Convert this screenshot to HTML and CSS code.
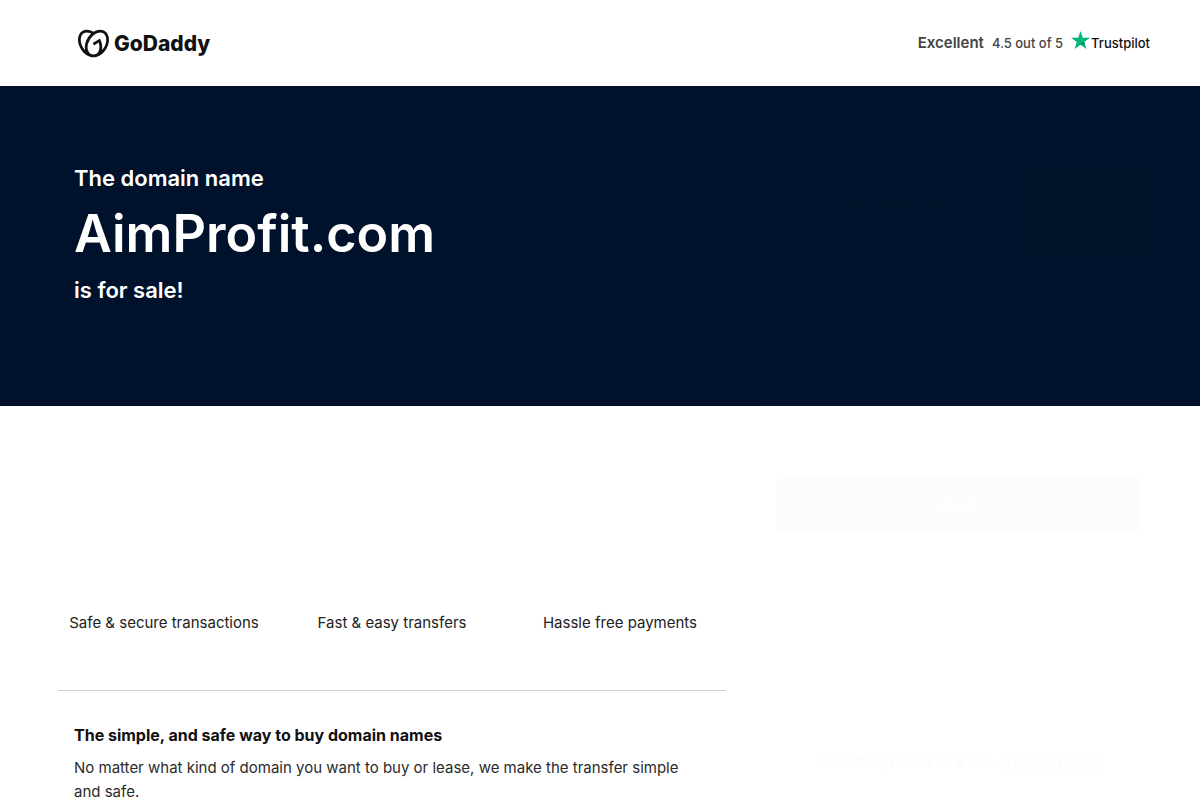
FILE: index.html
```html
<!DOCTYPE html>
<html lang="en">
<head>
<meta charset="utf-8">
<meta name="viewport" content="width=device-width, initial-scale=1">
<title>AimProfit.com is for sale</title>
<link rel="stylesheet" href="styles.css">
</head>
<body>
<header class="header">
  <a class="brand" href="#" aria-label="GoDaddy">
    <svg class="brand-mark" viewBox="0 0 24 24" aria-hidden="true"><path d="M20.702 2.29c-2.494-1.554-5.778-1.187-8.706.654C9.076 1.104 5.79.736 3.3 2.29c-3.941 2.463-4.42 8.806-1.07 14.167 2.47 3.954 6.333 6.269 9.77 6.226 3.439.043 7.301-2.273 9.771-6.226 3.347-5.361 2.872-11.704-1.069-14.167zM4.042 15.328a12.838 12.838 0 01-1.546-3.541 10.12 10.12 0 01-.336-3.338c.15-1.98.956-3.524 2.27-4.345 1.315-.822 3.052-.87 4.903-.137.281.113.556.24.825.382A15.11 15.11 0 007.5 7.54c-2.035 3.255-2.655 6.878-1.945 9.765a13.247 13.247 0 01-1.514-1.98zm17.465-3.541a12.866 12.866 0 01-1.547 3.54 13.25 13.25 0 01-1.513 1.984c.635-2.589.203-5.76-1.353-8.734a.39.39 0 00-.563-.153l-4.852 3.032a.397.397 0 00-.126.546l.712 1.139a.395.395 0 00.547.126l3.145-1.965c.101.306.203.606.28.916.296 1.086.41 2.214.335 3.337-.15 1.982-.956 3.525-2.27 4.347a4.437 4.437 0 01-2.25.65h-.101a4.432 4.432 0 01-2.25-.65c-1.314-.822-2.121-2.365-2.27-4.347-.074-1.123.039-2.251.335-3.337a13.212 13.212 0 014.05-6.482 10.148 10.148 0 012.849-1.765c1.845-.733 3.586-.685 4.9.137 1.316.822 2.122 2.365 2.271 4.345a10.146 10.146 0 01-.33 3.334z"/></svg>
    <span class="brand-name">GoDaddy</span>
  </a>
  <div class="rating">
    <strong class="rating-word">Excellent</strong>
    <span class="rating-score">4.5 out of 5</span>
    <a class="trustpilot" href="#">
      <svg class="star" viewBox="0 0 20 19" aria-hidden="true"><path fill="#00b67a" d="M10 0l2.4 7.2H20l-6.1 4.5 2.3 7.3L10 14.5 3.8 19l2.3-7.3L0 7.2h7.6z"/><path fill="#005128" d="M14.4 13.3l-.5-1.6L10 14.5z"/></svg>
      <span>Trustpilot</span>
    </a>
  </div>
</header>
<main class="page">
  <section class="hero">
    <h1 class="hero-text">
      <span class="hero-line">The domain name</span>
      <span class="hero-domain">AimProfit.com</span>
      <span class="hero-line">is for sale!</span>
    </h1>
  </section>
  <section class="details">
    <ul class="benefits">
      <li>Safe &amp; secure transactions</li>
      <li>Fast &amp; easy transfers</li>
      <li>Hassle free payments</li>
    </ul>
    <div class="about">
      <h2>The simple, and safe way to buy domain names</h2>
      <p>No matter what kind of domain you want to buy or lease, we make the transfer simple and safe.</p>
    </div>
  </section>
  <aside class="card">
    <h2 class="card-title">Get this domain</h2>
    <button class="card-button" type="button">Next</button>
    <p class="card-help">Need help? Give us a call. <a href="#">480-651-9741</a></p>
  </aside>
</main>
</body>
</html>
```
FILE: styles.css
```css
* { box-sizing: border-box; }

body {
  margin: 0;
  background: #fff;
  color: #111;
  font: 15px/24px Inter, sans-serif;
  overflow-x: hidden;
}

h1, h2, p, ul { margin: 0; padding: 0; }

a { color: inherit; text-decoration: none; }

.header {
  display: flex;
  align-items: center;
  justify-content: space-between;
  height: 86px;
  padding: 0 50px 0 78px;
}

.brand { display: flex; align-items: center; gap: 5px; }
.brand-mark { width: 31px; height: 31px; fill: #111; }
.brand-name { padding-top: 2px; font: 800 21px/32px Inter, sans-serif; }

.rating { display: flex; align-items: center; gap: 8px; color: #444; }
.rating-word { font-size: 15px; font-weight: 600; }
.rating-score { font-size: 13px; font-weight: 500; }
.trustpilot {
  display: flex;
  align-items: center;
  gap: 1px;
  color: #111;
  font: 500 13px/20px Inter, sans-serif;
}
.star { width: 19px; height: 18px; margin-bottom: 6px; }

.page {
  display: grid;
  grid-template-columns: minmax(0, 668px) minmax(0, 396px);
  column-gap: 34px;
  padding: 0 44px 0 58px;
  grid-template-rows: 320px auto;
  background: linear-gradient(#00122b 320px, #fff 320px);
}

.hero { padding: 76px 16px 0; }
.hero-text { display: flex; flex-direction: column; color: #fff; font-weight: 600; }
.hero-line { font-size: 22px; line-height: 32px; }
.hero-domain { font-size: 52px; line-height: 80px; }

.details { grid-column: 1; }
.benefits {
  display: grid;
  grid-template-columns: repeat(3, 1fr);
  column-gap: 16px;
  padding: 205px 0 55px;
  border-bottom: 1px solid #d0d0d0;
  list-style: none;
  text-align: center;
}
.benefits li { color: #222; }
.about { padding: 32px 32px 32px 16px; }
.about h2 { font-size: 16px; line-height: 24px; font-weight: 700; }
.about p { margin-top: 9px; color: #2b2b2b; }

.card {
  grid-column: 2;
  grid-row: 1 / 3;
  display: flex;
  flex-direction: column;
  margin-top: 80px;
  padding: 20px 16px;
  border-radius: 4px;
  background: rgb(255 255 255 / 30%);
  opacity: 0.012;
}
.card-title { color: #000; font-size: 24px; line-height: 28px; font-weight: 700; }
.card-button {
  height: 54px;
  margin-top: 264px;
  border: 0;
  border-radius: 4px;
  background: #777;
  color: #fff;
  font: 600 16px/24px Inter, sans-serif;
}
.card-help { margin-top: 218px; text-align: center; }
.card-help a { text-decoration: underline; }
```
